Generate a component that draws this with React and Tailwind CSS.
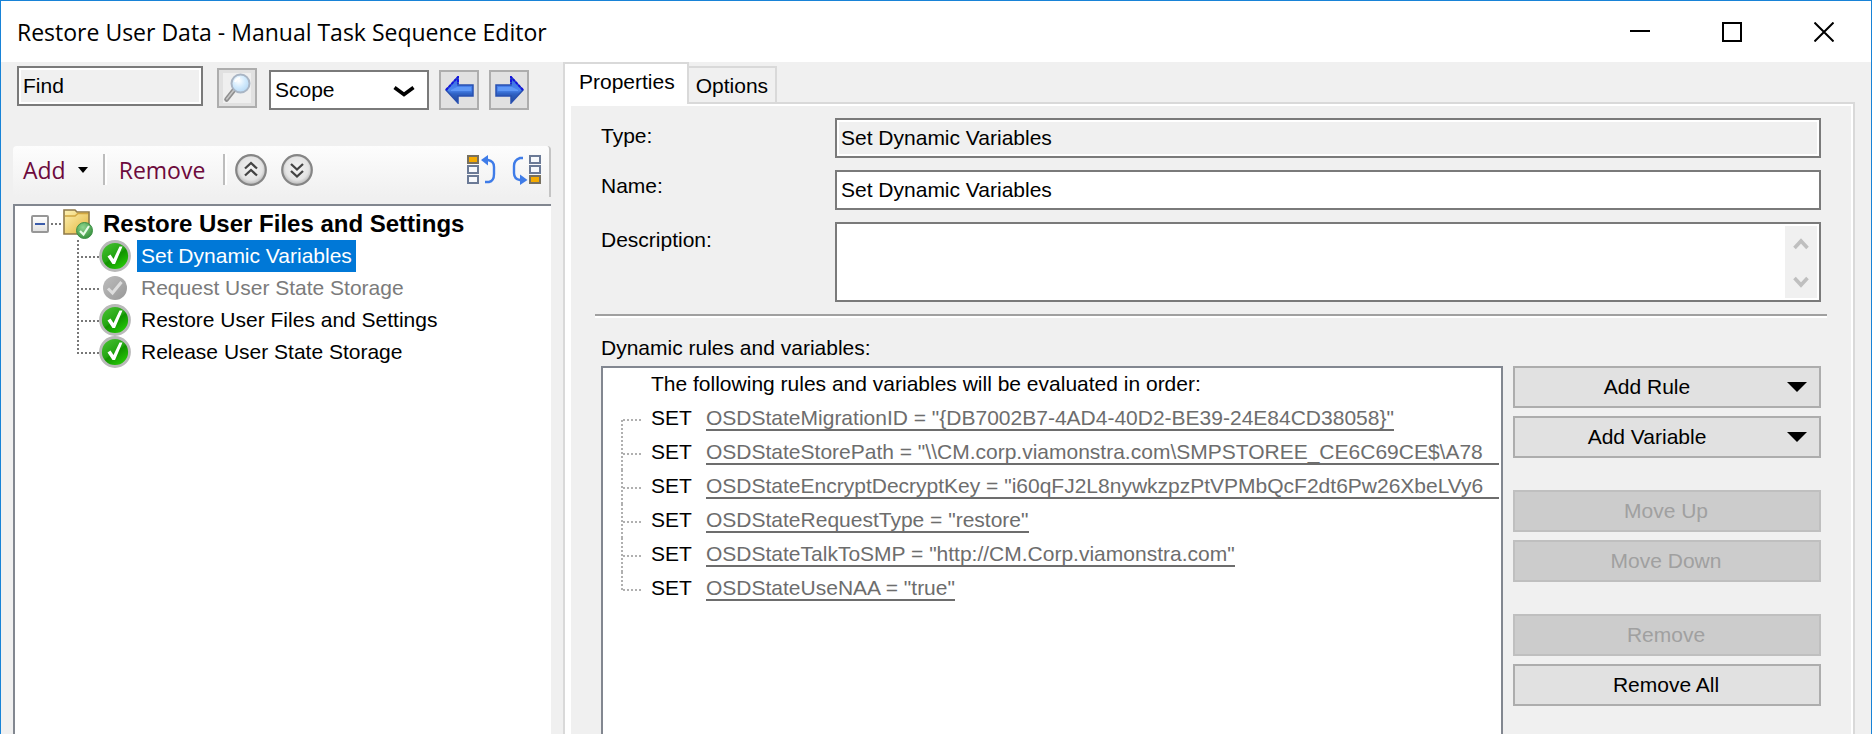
import React from "react";

const treeItems = [
  { label: "Set Dynamic Variables", state: "selected" },
  { label: "Request User State Storage", state: "disabled" },
  { label: "Restore User Files and Settings", state: "normal" },
  { label: "Release User State Storage", state: "normal" },
];

const rules = [
  { text: 'OSDStateMigrationID = "{DB7002B7-4AD4-40D2-BE39-24E84CD38058}"' },
  { text: 'OSDStateStorePath = "\\\\CM.corp.viamonstra.com\\SMPSTOREE_CE6C69CE$\\A78', clipped: true },
  { text: 'OSDStateEncryptDecryptKey = "i60qFJ2L8nywkzpzPtVPMbQcF2dt6Pw26XbeLVy6', clipped: true },
  { text: 'OSDStateRequestType = "restore"' },
  { text: 'OSDStateTalkToSMP = "http://CM.Corp.viamonstra.com"' },
  { text: 'OSDStateUseNAA = "true"' },
];

function WindowButton({ label, children }) {
  return (
    <button type="button" aria-label={label} className="flex h-full w-[92px] items-center justify-center">
      <svg width="20" height="20" viewBox="0 0 20 20" fill="none" stroke="#000" strokeWidth="2">
        {children}
      </svg>
    </button>
  );
}

function TitleBar() {
  return (
    <header className="flex h-[61px] items-center justify-between bg-white pr-px pl-4">
      <h1 className="font-['Open_Sans',sans-serif] text-[23px] leading-8 whitespace-nowrap">
        Restore User Data - Manual Task Sequence Editor
      </h1>
      <div className="flex h-full">
        <WindowButton label="Minimize">
          <path d="M0 9H20" />
        </WindowButton>
        <WindowButton label="Maximize">
          <rect x="1" y="1" width="18" height="18" />
        </WindowButton>
        <WindowButton label="Close">
          <path d="M0.5 0.5L19.5 19.5M19.5 0.5L0.5 19.5" />
        </WindowButton>
      </div>
    </header>
  );
}

function MagnifierIcon() {
  return (
    <svg width="28" height="30" viewBox="0 0 28 30">
      <defs>
        <radialGradient id="lens" cx="0.4" cy="0.35" r="0.7">
          <stop offset="0" stopColor="#ffffff" />
          <stop offset="0.5" stopColor="#d3ebfd" />
          <stop offset="1" stopColor="#b4d7f4" />
        </radialGradient>
      </defs>
      <rect width="28" height="30" fill="#efefef" />
      <path d="M11 17L3.500 26.500" stroke="#8e8e8e" strokeWidth="4.600" strokeLinecap="round" />
      <path d="M10.500 17.500L3.800 26" stroke="#c6c6c6" strokeWidth="1.600" strokeLinecap="round" />
      <circle cx="17.500" cy="10.500" r="9" fill="url(#lens)" stroke="#a9b5c4" strokeWidth="2" />
      <path d="M12 9a6 6 0 0 1 5-4" stroke="#fff" strokeWidth="2" fill="none" />
    </svg>
  );
}

function ArrowIcon({ back }) {
  const d = back
    ? "M1 14L13 1V9H28V20H13V27Z"
    : "M28 14L16 1V9H1V20H16V27Z";
  const edge = back ? "M1 14L13 1V8" : "M28 14L16 1V8";
  const shine = back ? "M6 14L12 11H26V15H6Z" : "M23 14L17 11H3V15H23Z";
  const gid = back ? "arrowBack" : "arrowNext";
  return (
    <svg width="29" height="28" viewBox="0 0 29 28">
      <defs>
        <linearGradient id={gid} x1="0" y1="0" x2="0" y2="1">
          <stop offset="0" stopColor="#3a6be0" />
          <stop offset="0.5" stopColor="#4a86ee" />
          <stop offset="0.65" stopColor="#2f62c4" />
          <stop offset="1" stopColor="#1f4796" />
        </linearGradient>
      </defs>
      <path d={d} fill={"url(#" + gid + ")"} stroke="#2850b0" strokeWidth="1.500" />
      <path d={shine} fill="#5f98f6" />
      <path d={edge} fill="none" stroke="#1414e0" strokeWidth="2" strokeDasharray="3 1" />
    </svg>
  );
}

function IconButton({ label, children, className }) {
  return (
    <button
      type="button"
      aria-label={label}
      className={"flex size-10 shrink-0 items-center justify-center border-2 border-[#adadad] bg-[#e1e1e1] " + className}
    >
      {children}
    </button>
  );
}

function SearchRow() {
  return (
    <div className="flex items-start pt-1 pl-1">
      <input
        aria-label="Find"
        defaultValue="Find"
        className="h-10 w-[186px] border-2 border-[#7a7a7a] bg-[#f0f0f0] pl-1 shadow-[inset_0_0_0_2px_#fff] outline-none"
      />
      <IconButton label="Search" className="mt-0.5 ml-3.5">
        <MagnifierIcon />
      </IconButton>
      <div className="relative mt-1 ml-3">
        <select
          aria-label="Scope"
          className="h-10 w-40 appearance-none border-2 border-[#7a7a7a] bg-white pl-1 outline-none"
        >
          <option>Scope</option>
        </select>
        <svg className="pointer-events-none absolute top-4 right-3.5" width="22" height="11" viewBox="0 0 22 11">
          <path d="M1.500 1.500L11 8.500L20.500 1.500" fill="none" stroke="#000" strokeWidth="3.600" />
        </svg>
      </div>
      <IconButton label="Previous" className="mt-1 ml-2.5">
        <ArrowIcon back />
      </IconButton>
      <IconButton label="Next" className="mt-1 ml-2.5">
        <ArrowIcon />
      </IconButton>
    </div>
  );
}

function ChevronCircle({ down }) {
  const gid = down ? "roundDown" : "roundUp";
  return (
    <svg width="32" height="32" viewBox="0 0 32 32">
      <defs>
        <radialGradient id={gid} cx="0.5" cy="0.45" r="0.55">
          <stop offset="0" stopColor="#f4f4f4" />
          <stop offset="0.7" stopColor="#e4e4e4" />
          <stop offset="1" stopColor="#b4b4b4" />
        </radialGradient>
      </defs>
      <circle cx="16" cy="16" r="14.800" fill={"url(#" + gid + ")"} stroke="#858585" strokeWidth="2.200" />
      <path
        d={down ? "M10 10L16 15.500L22 10M10 17L16 22.500L22 17" : "M10 14.500L16 9L22 14.500M10 21.500L16 16L22 21.500"}
        fill="none"
        stroke="#444"
        strokeWidth="2.300"
      />
    </svg>
  );
}

function StackBoxes({ x, active }) {
  return [0, 1, 2].map((i) => (
    <rect
      key={i}
      x={x + 1}
      y={1 + i * 10}
      width="10"
      height="7"
      fill={i === active ? "#f5ab00" : "#f7f9fc"}
      stroke={i === active ? "#77705f" : "#6b7a96"}
      strokeWidth="2"
    />
  ));
}

function MoveIcon({ down }) {
  return (
    <svg width="30" height="30" viewBox="0 0 30 30" fill="none">
      {down ? (
        <>
          <path d="M11 3H8Q2 5 2 11V18Q2 24 8 25H10" stroke="#3f7ce8" strokeWidth="2.400" />
          <path d="M8 19.500L15.500 25L8 30Z" fill="#3f7ce8" />
          <StackBoxes x={17} active={2} />
        </>
      ) : (
        <>
          <StackBoxes x={0} active={0} />
          <path d="M19 5H21Q27 6 27 12V19Q27 26 22 27H18" stroke="#3f7ce8" strokeWidth="2.400" />
          <path d="M21 0L14 5L21 10.500Z" fill="#3f7ce8" />
        </>
      )}
    </svg>
  );
}

function Divider({ className }) {
  return <span className={"h-[31px] w-1 border-r-2 border-l-2 border-r-white border-l-[#bdbdbd] " + className} />;
}

function Toolbar() {
  return (
    <div
      role="toolbar"
      className="mt-9 flex h-[51px] items-center rounded-t-sm border-r-2 border-[#c4c4c4] bg-linear-to-b from-[#fdfdfd] to-[#f0f0f0] pr-[7px] pb-1 pl-[10px] font-['Open_Sans',sans-serif] text-[23px] leading-8 text-[#6d0a3c]"
    >
      <button type="button" className="flex items-center gap-3">
        Add
        <svg width="10" height="6" viewBox="0 0 10 6">
          <path d="M0 0H10L5 6Z" fill="#000" />
        </svg>
      </button>
      <Divider className="ml-[15px]" />
      <button type="button" className="ml-3">
        Remove
      </button>
      <Divider className="ml-[18px]" />
      <button type="button" aria-label="Collapse all" className="ml-2">
        <ChevronCircle />
      </button>
      <button type="button" aria-label="Expand all" className="ml-3.5">
        <ChevronCircle down />
      </button>
      <button type="button" aria-label="Move up" className="ml-auto">
        <MoveIcon />
      </button>
      <button type="button" aria-label="Move down" className="ml-[15px]">
        <MoveIcon down />
      </button>
    </div>
  );
}

function FolderIcon() {
  return (
    <svg width="30" height="30" viewBox="0 0 30 30" className="shrink-0">
      <defs>
        <linearGradient id="folder" x1="0" y1="0" x2="1" y2="1">
          <stop offset="0" stopColor="#fdf2b4" />
          <stop offset="1" stopColor="#e3b53c" />
        </linearGradient>
        <radialGradient id="badge" cx="0.4" cy="0.3" r="0.8">
          <stop offset="0" stopColor="#8ed58e" />
          <stop offset="1" stopColor="#2d8a35" />
        </radialGradient>
      </defs>
      <path d="M1 25V1H12L14 3H26V25Z" fill="url(#folder)" stroke="#8f7a4a" strokeWidth="1.600" />
      <path d="M2 7H12L15 4.500H25" fill="none" stroke="#d1a740" strokeWidth="1.500" />
      <circle cx="21.500" cy="21.500" r="8" fill="url(#badge)" stroke="#3d9046" />
      <path d="M17 22L20.500 25.500L26 17" fill="none" stroke="#e9fbe9" strokeWidth="2.200" />
    </svg>
  );
}

function CheckIcon({ muted }) {
  if (muted) {
    return (
      <svg width="32" height="32" viewBox="0 0 32 32" className="shrink-0">
        <defs>
          <linearGradient id="mutedBall" x1="0" y1="0" x2="1" y2="1">
            <stop offset="0" stopColor="#bdbdbd" />
            <stop offset="1" stopColor="#989898" />
          </linearGradient>
        </defs>
        <circle cx="16" cy="16" r="12" fill="url(#mutedBall)" />
        <path d="M9 16.500L13.500 21L22.500 10" fill="none" stroke="#dedede" strokeWidth="3" />
      </svg>
    );
  }
  return (
    <svg width="32" height="32" viewBox="0 0 32 32" className="shrink-0">
      <defs>
        <linearGradient id="greenBall" x1="0.1" y1="0" x2="0.8" y2="1">
          <stop offset="0" stopColor="#4cc437" />
          <stop offset="0.5" stopColor="#23a512" />
          <stop offset="0.55" stopColor="#129300" />
          <stop offset="1" stopColor="#2ad408" />
        </linearGradient>
      </defs>
      <circle cx="16" cy="16" r="14.500" fill="url(#greenBall)" stroke="#b9b9b9" strokeWidth="2.800" />
      <path d="M8.500 16.500L11.500 14.500L14.500 19L20.500 6.500H23.500L16 24H13.500Z" fill="#fff" />
    </svg>
  );
}

function TreeBranch({ last }) {
  return (
    <svg width="22" height="32" viewBox="0 0 22 32" stroke="#777" strokeWidth="2" strokeDasharray="2 2" className="shrink-0">
      <path d={last ? "M1 0V18" : "M1 0V32"} />
      <path d="M4 17H22" />
    </svg>
  );
}

const labelStyles = {
  selected: "bg-[#0078d7] text-white",
  disabled: "text-[#7b7b7b]",
  normal: "text-black",
};

function TaskTree() {
  return (
    <nav
      aria-label="Task sequence"
      className="mt-[7px] flex-1 border-t-2 border-l-2 border-[#828790] bg-white pt-0.5 pl-4"
    >
      <div className="flex h-8 items-center">
        <button
          type="button"
          aria-label="Collapse group"
          className="flex size-[18px] items-center justify-center rounded-xs border-2 border-[#979797] bg-linear-to-b from-white to-[#e2e2e2]"
        >
          <span className="h-0.5 w-2.5 bg-[#3a5cab]" />
        </button>
        <svg width="14" height="2" viewBox="0 0 14 2" stroke="#777" strokeWidth="2" strokeDasharray="2 2">
          <path d="M2 1H14" />
        </svg>
        <FolderIcon />
        <span className="ml-2.5 text-2xl leading-8 font-bold whitespace-nowrap">Restore User Files and Settings</span>
      </div>
      <ul className="pl-[46px]">
        {treeItems.map((item, i) => (
          <li key={item.label} className="flex h-8 items-center">
            <TreeBranch last={i === treeItems.length - 1} />
            <CheckIcon muted={item.state === "disabled"} />
            <span className={"ml-1.5 px-1 leading-8 whitespace-nowrap " + labelStyles[item.state]}>{item.label}</span>
          </li>
        ))}
      </ul>
    </nav>
  );
}

function Chevron({ down }) {
  return (
    <svg width="16" height="12" viewBox="0 0 16 12" fill="none" stroke="#bfbfbf" strokeWidth="3.600">
      <path d={down ? "M1.500 2L8 9L14.500 2" : "M1.500 10L8 3L14.500 10"} />
    </svg>
  );
}

function PropertyForm() {
  return (
    <div className="grid grid-cols-[234px_1fr] gap-y-3 pt-3 pr-[30px] pl-[30px]">
      <label htmlFor="type" className="pt-1.5">
        Type:
      </label>
      <input
        id="type"
        readOnly
        defaultValue="Set Dynamic Variables"
        className="h-10 border-2 border-[#7a7a7a] bg-[#f0f0f0] pl-1 shadow-[inset_0_0_0_2px_#fff] outline-none"
      />
      <label htmlFor="name" className="pt-1">
        Name:
      </label>
      <input
        id="name"
        defaultValue="Set Dynamic Variables"
        className="h-10 border-2 border-[#7a7a7a] bg-white pl-1 outline-none"
      />
      <label htmlFor="description" className="pt-1.5">
        Description:
      </label>
      <div className="flex h-20 border-2 border-[#7a7a7a] bg-white p-0.5">
        <textarea id="description" className="flex-1 resize-none overflow-hidden bg-white outline-none" />
        <div className="flex w-8 flex-col items-center justify-between bg-[#f0f0f0] pt-3 pb-2.5">
          <button type="button" aria-label="Scroll up">
            <Chevron />
          </button>
          <button type="button" aria-label="Scroll down">
            <Chevron down />
          </button>
        </div>
      </div>
    </div>
  );
}

function RuleBranch({ first, last }) {
  const d = first ? "M1 18V34" : last ? "M1 0V18" : "M1 0V34";
  return (
    <svg width="20" height="34" viewBox="0 0 20 34" stroke="#b0b0b0" strokeWidth="2" strokeDasharray="2 2" className="shrink-0">
      <path d={d} />
      <path d="M2 18H20" />
    </svg>
  );
}

function RuleList() {
  return (
    <div className="min-w-0 flex-1 overflow-hidden border-2 border-b-0 border-[#828790] bg-white pt-0.5 pr-0.5">
      <p className="h-8 pl-12 leading-7 whitespace-nowrap">
        The following rules and variables will be evaluated in order:
      </p>
      <ul>
        {rules.map((rule, i) => (
          <li key={rule.text} className="flex h-[34px] items-center pl-[18px] leading-[22px] whitespace-nowrap">
            <RuleBranch first={i === 0} last={i === rules.length - 1} />
            <span className="w-[54px] shrink-0 border-b-2 border-transparent pl-[10px] text-black">SET</span>
            <a
              href="#rule"
              className={
                "ml-[11px] min-w-0 overflow-hidden border-b-2 border-[#6d6d6d] text-[#6d6d6d] " +
                (rule.clipped ? "grow" : "")
              }
            >
              {rule.text}
            </a>
          </li>
        ))}
      </ul>
    </div>
  );
}

function ActionButton({ children, menu, disabled, className = "" }) {
  const tone = disabled
    ? "border-[#bfbfbf] bg-[#cccccc] text-[#a0a0a0]"
    : "border-[#adadad] bg-[#e1e1e1] text-black";
  return (
    <button type="button" disabled={disabled} className={"flex h-[42px] items-center border-2 px-3 " + tone + " " + className}>
      <span className={menu ? "flex-1 pr-5" : "flex-1 pr-0.5"}>{children}</span>
      {menu && (
        <svg width="20" height="10" viewBox="0 0 20 10">
          <path d="M0 0H20L10 10Z" fill="#000" />
        </svg>
      )}
    </button>
  );
}

function RuleActions() {
  return (
    <div className="flex w-[308px] shrink-0 flex-col gap-2">
      <ActionButton menu>Add Rule</ActionButton>
      <ActionButton menu>Add Variable</ActionButton>
      <ActionButton disabled className="mt-6">
        Move Up
      </ActionButton>
      <ActionButton disabled>Move Down</ActionButton>
      <ActionButton disabled className="mt-6">
        Remove
      </ActionButton>
      <ActionButton>Remove All</ActionButton>
    </div>
  );
}

function PropertiesPanel() {
  return (
    <section className="flex min-w-0 flex-1 flex-col pr-4">
      <div role="tablist" className="flex items-end">
        <button
          type="button"
          role="tab"
          aria-selected="true"
          className="relative -mb-0.5 h-[42px] border-2 border-b-0 border-[#d9d9d9] bg-white pr-3 pb-1 pl-3.5"
        >
          Properties
        </button>
        <button
          type="button"
          role="tab"
          aria-selected="false"
          className="h-9 border-t-2 border-r-2 border-[#d9d9d9] px-[7px] pt-0.5"
        >
          Options
        </button>
      </div>
      <div className="flex flex-1 flex-col border-2 border-b-0 border-[#d9d9d9] bg-white pt-0.5 pr-0.5 pl-1.5">
        <div className="flex flex-1 flex-col bg-[#f0f0f0]">
          <PropertyForm />
          <hr className="mt-3 mr-6 ml-6 h-1 border-t-2 border-b-2 border-t-[#a0a0a0] border-b-white" />
          <h2 className="mt-4 pl-[30px] leading-7">Dynamic rules and variables:</h2>
          <div className="mt-1 flex flex-1 gap-2.5 pr-[30px] pl-[30px]">
            <RuleList />
            <RuleActions />
          </div>
        </div>
      </div>
    </section>
  );
}

export default function App() {
  return (
    <div className="flex min-h-screen flex-col border border-b-0 border-[#1883d7] bg-[#f0f0f0] font-['Liberation_Sans',Arial,sans-serif] text-[21px] leading-6 text-black">
      <TitleBar />
      <main className="flex flex-1">
        <section className="flex w-[550px] shrink-0 flex-col pl-3">
          <SearchRow />
          <Toolbar />
          <TaskTree />
        </section>
        <div className="w-3 shrink-0" />
        <PropertiesPanel />
      </main>
    </div>
  );
}
